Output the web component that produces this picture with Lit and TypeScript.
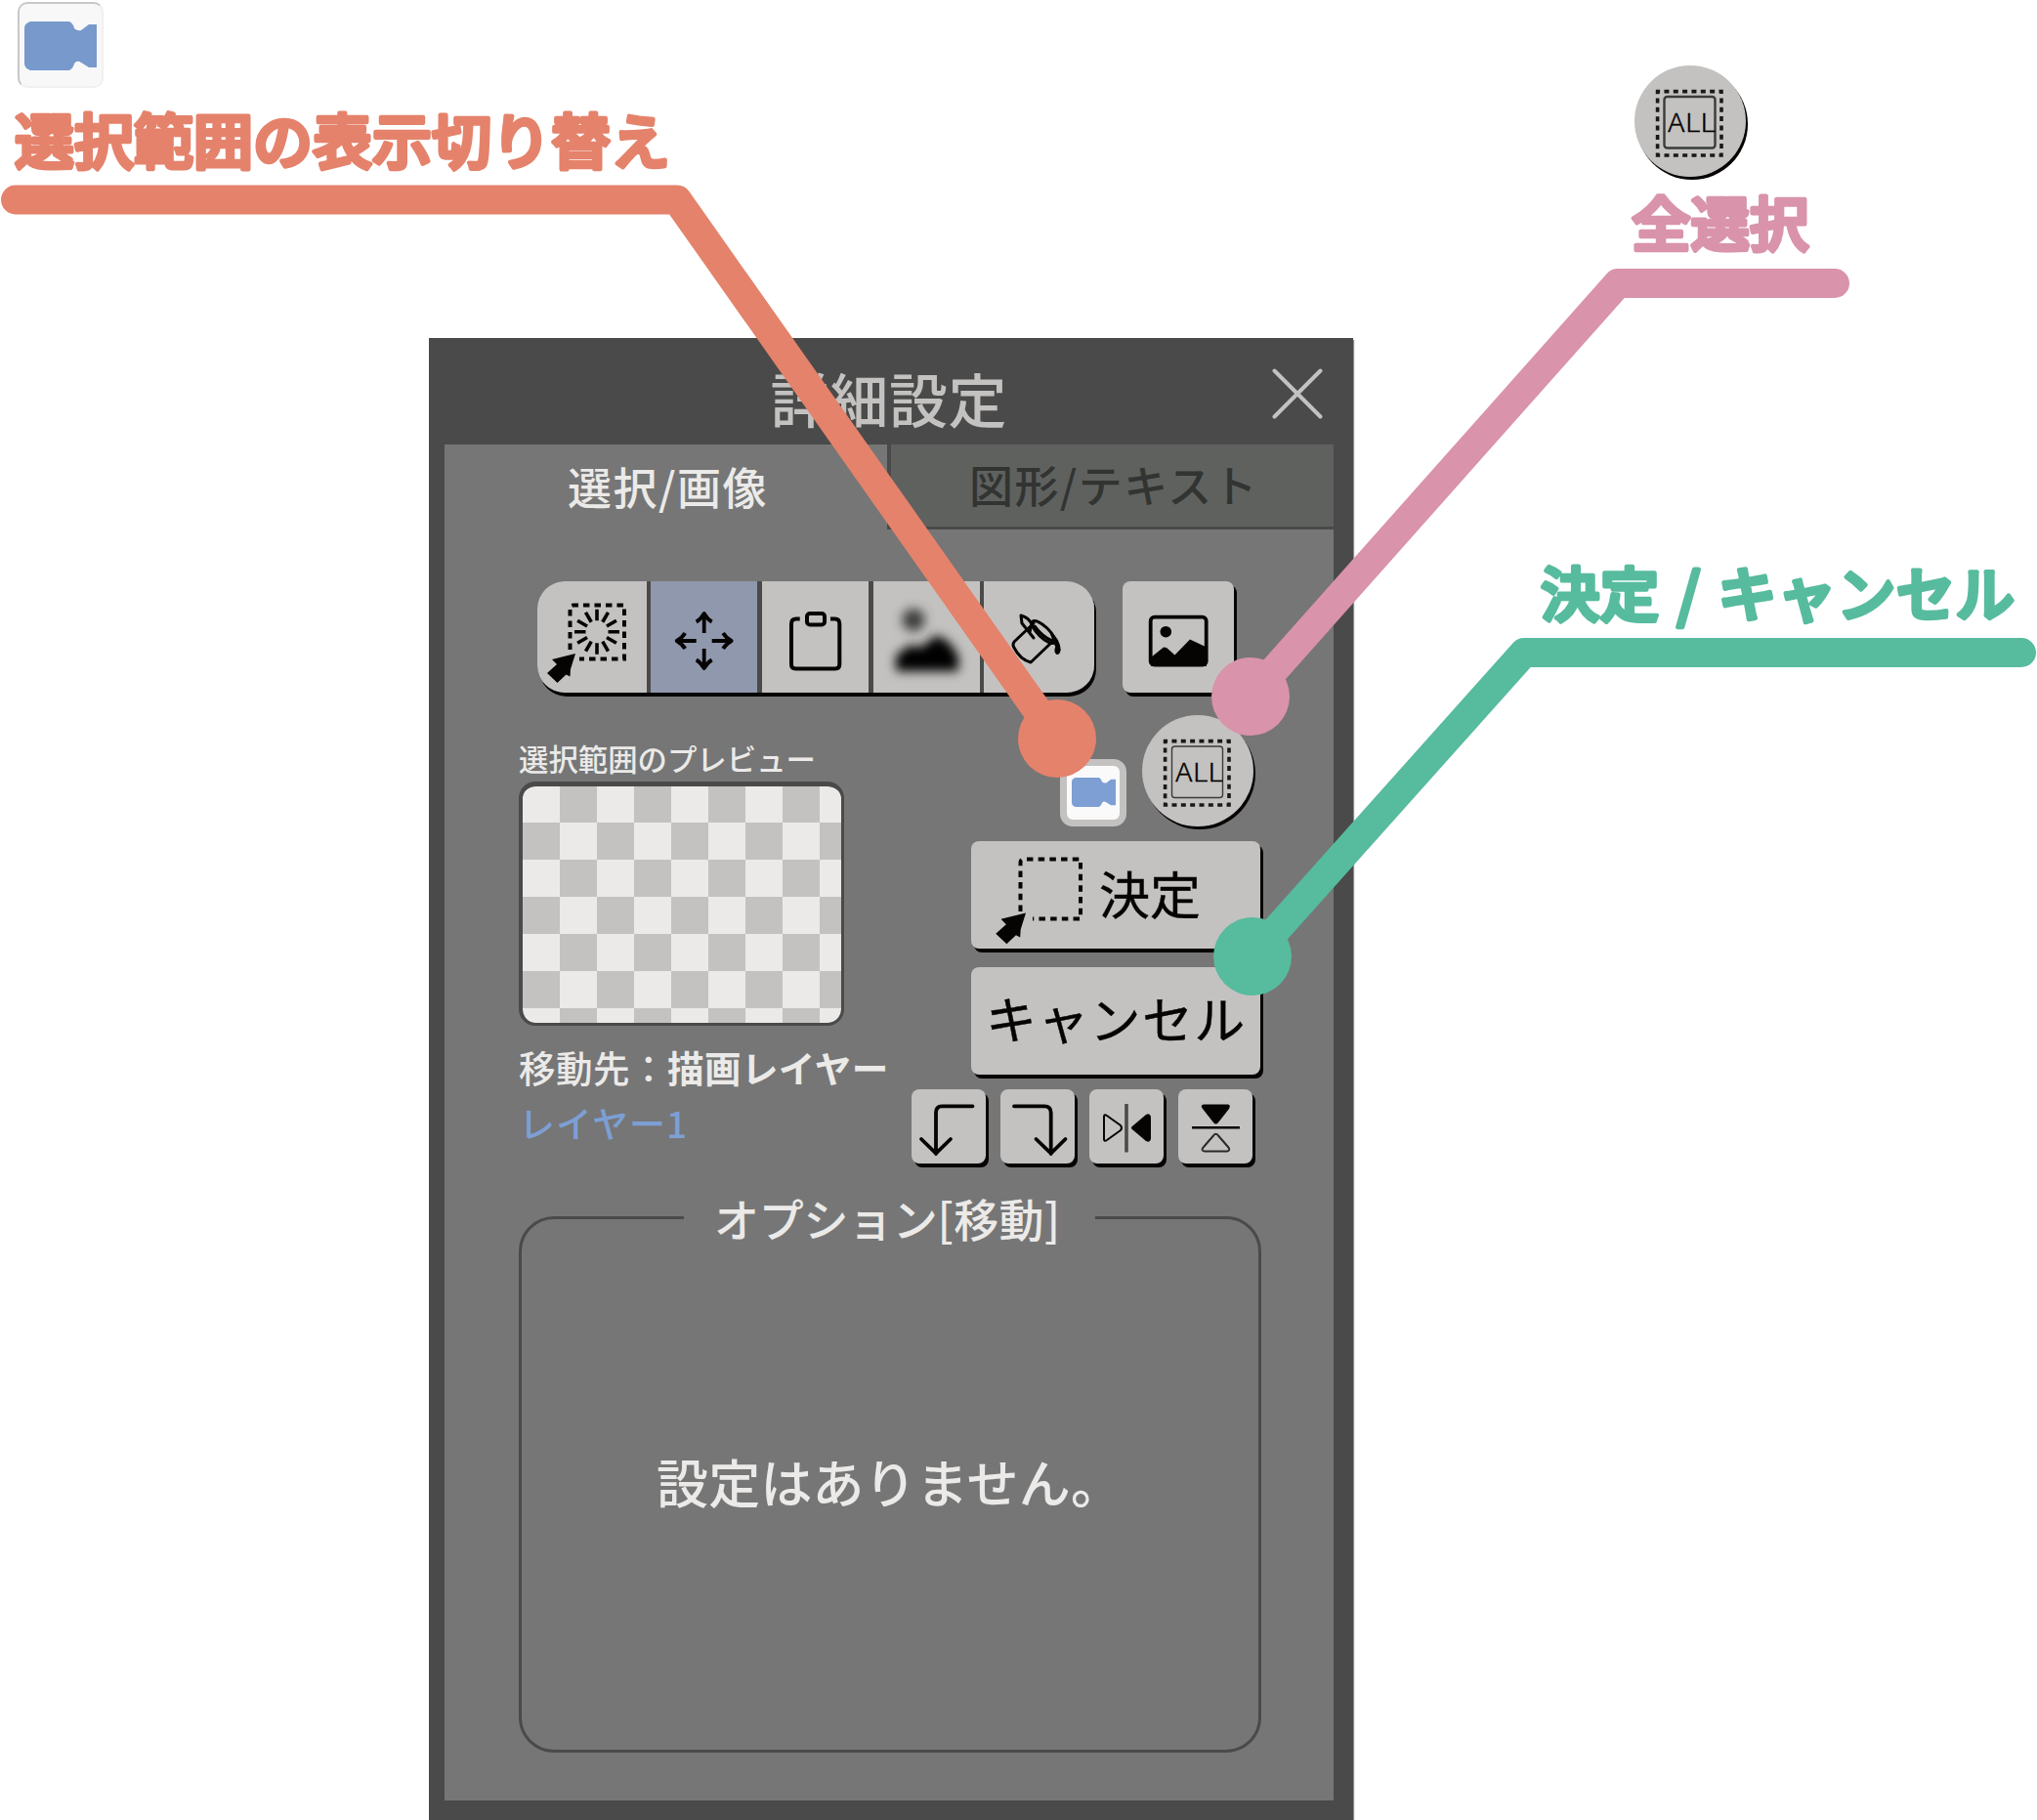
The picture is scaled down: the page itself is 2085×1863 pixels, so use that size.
import { LitElement, html, css, svg } from "lit";
import { customElement, property } from "lit/decorators.js";

const RAYS = Array.from({ length: 12 }, (_, i) => (i * Math.PI) / 6);

@customElement("camera-icon")
class CameraIcon extends LitElement {
  static styles = css`
    :host { display: block; color: #7d9fd4; }
    svg { display: block; width: 100%; height: 100%; }
  `;
  render() {
    return html`<svg viewBox="0 0 74 50" preserveAspectRatio="none">
      <path fill="currentColor"
        d="M6 0H46Q50 2 51 7Q54 10 58 9L66 3H74V47H66L58 42Q54 39 51 43Q50 48 46 50H6Q0 48 0 43V7Q0 2 6 0Z" />
    </svg>`;
  }
}

@customElement("all-icon")
class AllIcon extends LitElement {
  @property({ type: Number }) frame = 1.4;
  static styles = css`
    :host { display: block; width: 114px; height: 114px; border-radius: 50%; background: #c3c2c0; box-shadow: 2px 3px 0 #060303; }
    svg { display: block; }
    text { font: 300 25.5px "Noto Sans CJK JP", sans-serif; fill: #060303; stroke: #060303; stroke-width: 0.3px; }
  `;
  render() {
    return html`<svg width="114" height="114" viewBox="0 0 114 114">
      <rect x="23.6" y="26.6" width="65.4" height="65.4" fill="none" stroke="#1a1818" stroke-width="3.6" stroke-dasharray="5 4.34" stroke-dashoffset="2.5" />
      <rect x="30.5" y="32" width="52" height="52.5" rx="3" fill="none" stroke="#3a3b3b" stroke-width=${this.frame} />
      <text x="34" y="68" textLength="49" lengthAdjust="spacingAndGlyphs">ALL</text>
    </svg>`;
  }
}

@customElement("app-root")
class AppRoot extends LitElement {
  static styles = css`
    :host { display: block; font-family: "Noto Sans CJK JP", "Liberation Sans", sans-serif; }
    svg { display: block; }
    .stage { position: relative; width: 2085px; height: 1863px; overflow: hidden; background: #fff; box-sizing: border-box; padding: 346px 0 0 438.5px; }
    .panel { width: 946px; height: 1517px; background: #4a4a4a; box-shadow: 1px 2px 1px #8c8c8c; }
    .header { display: flex; align-items: flex-start; height: 109px; box-sizing: border-box; padding: 31px 31px 0 350px; justify-content: space-between; }
    .title { font-size: 60px; line-height: 60px; letter-spacing: 0.7px; color: #c3c2c0; font-weight: 500; white-space: nowrap; }
    .inner { width: 910px; height: 1388px; margin-left: 16.5px; background: #767676; }
    .tabs { display: flex; height: 87px; }
    .tab { box-sizing: border-box; height: 87px; font-size: 45px; line-height: 45px; letter-spacing: 1.5px; white-space: nowrap; font-weight: 500; }
    .tab.on { width: 453px; padding: 20px 0 0 126px; color: #ebeae8; }
    .tab.off { width: 457px; padding: 18px 0 0 80px; color: #323432; background: #5f615f; border-left: 4px solid #4a4a4a; border-bottom: 3px solid #4a4a4a; letter-spacing: 1.4px; }
    .tools { display: flex; gap: 29px; padding: 53px 0 0 95px; }
    .group { display: flex; width: 570px; height: 114px; overflow: hidden; border-radius: 28px; background: #4a4a4a; }
    .groupwrap { border-radius: 28px; box-shadow: 2px 4px 0 #060303; }
    .seg { width: 109px; background: #c3c2c0; margin-right: 5px; flex: none; }
    .seg.first { width: 112px; margin-right: 4px; }
    .seg.fourth { margin-right: 4px; }
    .seg.last { width: 113px; margin: 0; }
    .seg.active { background: #8f98ac; }
    .btn { background: #c3c2c0; border-radius: 8px; box-shadow: 3px 4px 0 #060303; box-sizing: border-box; }
    .image { width: 114px; height: 114px; }
    .middle { display: flex; justify-content: space-between; padding: 0 75px 0 76px; height: 514px; }
    .left { padding-top: 52px; color: #ebeae8; white-space: nowrap; }
    .label { font-size: 30.4px; line-height: 30px; font-weight: 500; }
    .preview {
      margin-top: 9px; box-sizing: border-box; width: 333px; height: 250px; border: solid #4a4a4a; border-width: 5px 3px 3px 4px; border-radius: 17px;
      background: repeating-conic-gradient(#c3c2c0 0 25%, #ebeae8 0 50%) 0 -1px / 76px 76px padding-box;
    }
    .dest { margin-top: 23px; font-size: 37.6px; line-height: 38px; letter-spacing: 0.4px; font-weight: 500; }
    .dest b { font-weight: 700; }
    .layer { margin-top: 19px; font-size: 37px; line-height: 38px; letter-spacing: 1px; color: #7d9fd4; font-weight: 500; }
    .right { width: 357px; display: flex; flex-direction: column; align-items: flex-end; padding-top: 23px; }
    .toggles { display: flex; align-items: flex-end; gap: 16px; margin-right: 7px; }
    .eye { width: 68px; height: 69px; box-sizing: border-box; border: 7.5px solid #c3c2c0; border-radius: 13px; background: #fafafa; padding: 12px 4px 11px 5px; }
    .eye camera-icon { height: 30px; }
    .action { width: 296px; height: 110px; display: flex; font-size: 52px; line-height: 52px; color: #060303; white-space: nowrap; font-weight: 400; -webkit-text-stroke: 0.4px currentColor; }
    .ok { margin-top: 15px; }
    .ok span { margin: 27px 0 0 -3px; }
    .cancel { margin-top: 19px; padding: 26px 0 0 15px; letter-spacing: 1.3px; }
    .turns { display: flex; gap: 15px; margin: 15px 8px 0 0; }
    .turn { width: 76px; height: 76px; }
    .options { width: 760px; height: 571px; box-sizing: border-box; margin: 0 0 0 76px; padding: 0; border: 3.5px solid #4a4a4a; border-radius: 36px; min-width: 0; }
    .options legend { box-sizing: border-box; width: 421px; height: 46px; margin-left: 166px; padding: 0 0 0 31px; font-size: 46px; line-height: 46px; letter-spacing: 0.3px; color: #ebeae8; white-space: nowrap; font-weight: 500; }
    .kana { letter-spacing: -0.3px; }
    .none { padding: 220px 0 0 138px; font-size: 53px; line-height: 54px; letter-spacing: 0.2px; color: #ebeae8; white-space: nowrap; font-weight: 500; }
    .lines { position: absolute; left: 0; top: 0; }
    .note { font-size: 61px; font-weight: 500; stroke-width: 4.4px; white-space: pre; }
    .n1 { fill: #e5826b; stroke: #e5826b; }
    .n2 { fill: #d993aa; stroke: #d993aa; font-size: 60.5px; }
    .n3 { fill: #57bb9e; stroke: #57bb9e; font-size: 60.5px; word-spacing: 4px; letter-spacing: 0.3px; }
    .cam { position: absolute; left: 18px; top: 2px; width: 88px; height: 88px; box-sizing: border-box; border: 2px solid #f0f0f0; border-top-color: #c8c8c8; border-left-color: #c8c8c8; border-radius: 10px; background: #f8f8f8; padding: 18px 5px 16px; }
    .cam camera-icon { width: 74px; height: 50px; color: #7799cc; }
    .all { position: absolute; left: 1673px; top: 67px; }
  `;

  private cursor(x: number, y: number, scale = 1) {
    return svg`<path transform="translate(${x} ${y}) scale(${scale})" fill="#060303"
      d="M0 0L-24 6L-19 11L-29 20L-18.500 30L-9.500 21.500L-5.500 23.500L-5 16Z" />`;
  }

  render() {
    return html`
      <div class="stage">
        <div class="panel">
          <div class="header">
            <div class="title">詳細設定</div>
            <svg width="52" height="52" viewBox="0 0 52 52"><path d="M2.500 2.500L49.500 49.500M49.500 2.500L2.500 49.500" stroke="#c3c2c0" stroke-width="4" stroke-linecap="round" /></svg>
          </div>
          <div class="inner">
            <div class="tabs">
              <div class="tab on">選択/画像</div>
              <div class="tab off">図形/テキスト</div>
            </div>
            <div class="tools">
              <div class="groupwrap"><div class="group">
                <div class="seg first">
                  <svg width="112" height="114" viewBox="0 0 112 114">
                    <path d="M33.500 70V28Q33.500 24.500 37 24.500H89V79.500H43" fill="none" stroke="#060303" stroke-width="4" stroke-dasharray="6.500 5" />
                    <g stroke="#060303" stroke-width="3.600">
                      ${RAYS.map((a) => svg`<line x1=${61 + 11.5 * Math.cos(a)} y1=${51.7 + 11.5 * Math.sin(a)} x2=${61 + 23 * Math.cos(a)} y2=${51.7 + 23 * Math.sin(a)} />`)}
                    </g>
                    ${this.cursor(39, 74)}
                  </svg>
                </div>
                <div class="seg active">
                  <svg width="109" height="114" viewBox="0 0 109 114" fill="none" stroke="#060303" stroke-width="3.800">
                    ${[0, 90, 180, 270].map((r) => svg`<path transform="translate(54.700 61) rotate(${r})" d="M0 -8V-27M-8 -19.500Q-3.500 -22 0 -28Q3.500 -22 8 -19.500" stroke-linejoin="round" />`)}
                  </svg>
                </div>
                <div class="seg">
                  <svg width="109" height="114" viewBox="0 0 109 114" fill="none" stroke="#060303" stroke-width="4">
                    <path d="M38.700 38.500H35Q30 38.500 30 43.500V85Q30 89.500 34.500 89.500H75Q79.300 89.500 79.300 85V43.500Q79.300 38.500 74.500 38.500H70" />
                    <rect x="46" y="33" width="18" height="11.500" rx="3" />
                  </svg>
                </div>
                <div class="seg fourth">
                  <svg width="109" height="114" viewBox="0 0 109 114">
                    <defs><filter id="soft" x="-50%" y="-50%" width="200%" height="200%"><feGaussianBlur stdDeviation="5.500" /></filter></defs>
                    <g filter="url(#soft)">
                      <circle cx="41" cy="39.500" r="11.500" fill="#3c3e3e" />
                      <path d="M23 92V76L38 65L48 68L65 55L77 62L87 76V92Z" fill="#060303" />
                    </g>
                  </svg>
                </div>
                <div class="seg last">
                  <svg width="113" height="114" viewBox="0 0 113 114" fill="none" stroke="#060303" stroke-width="3" stroke-linejoin="round" stroke-linecap="round">
                    <path d="M51 43L31 62Q29 65 31 68Q37 80 48 83L70 62" />
                    <ellipse cx="61" cy="52" rx="15.500" ry="5.500" transform="rotate(44 61 52)" />
                    <path d="M51 58L39 43L38 35Q46 37 49 44L47 52M52 46Q60 57 70 61" />
                    <path d="M68 52Q77 59 78 70Q77 75 74.500 74Q72 72 74 67L71 60Z" fill="#060303" stroke-width="1.500" />
                  </svg>
                </div>
              </div></div>
              <div class="btn image">
                <svg width="114" height="114" viewBox="0 0 114 114">
                  <rect x="28.700" y="36.700" width="57" height="49" rx="4" fill="none" stroke="#060303" stroke-width="3.800" />
                  <circle cx="44.300" cy="51.700" r="5.800" fill="#060303" />
                  <path d="M29 78L42 67.500L45 68L53.500 75.500L69 59.500L86 67.500V87H29Z" fill="#060303" />
                </svg>
              </div>
            </div>
            <div class="middle">
              <div class="left">
                <div class="label">選択範囲のプレビュー</div>
                <div class="preview"></div>
                <div class="dest">移動先：<b>描画レイヤー</b></div>
                <div class="layer">レイヤー1</div>
              </div>
              <div class="right">
                <div class="toggles">
                  <div class="eye"><camera-icon></camera-icon></div>
                  <all-icon></all-icon>
                </div>
                <div class="btn action ok">
                  <svg width="134" height="110" viewBox="0 0 134 110">
                    <path d="M50.500 72V22Q50.500 18.500 54 18.500H112V79.500H63" fill="none" stroke="#060303" stroke-width="4" stroke-dasharray="6.500 5.200" />
                    ${this.cursor(56, 73.5, 1.06)}
                  </svg>
                  <span>決定</span>
                </div>
                <div class="btn action cancel">キャンセル</div>
                <div class="turns">
                  <div class="btn turn">
                    <svg width="76" height="76" viewBox="0 0 76 76" fill="none" stroke="#060303" stroke-width="3.800" stroke-linecap="round">
                      <path d="M62.500 17.300H31Q25 17.300 25 24V66M10 51L25 65.500L40 51" />
                    </svg>
                  </div>
                  <div class="btn turn">
                    <svg width="76" height="76" viewBox="0 0 76 76" fill="none" stroke="#060303" stroke-width="3.800" stroke-linecap="round">
                      <path d="M14 17.300H45Q51.700 17.300 51.700 24V66M36.500 51L51.700 65.500L66.500 51" />
                    </svg>
                  </div>
                  <div class="btn turn">
                    <svg width="76" height="76" viewBox="0 0 76 76" stroke-linejoin="round">
                      <path d="M38 15V64.500" stroke="#4a4a4a" stroke-width="3.600" />
                      <path d="M15 28Q15 25 18 27L32 37Q34 39.500 32 42L18 52Q15 54 15 51Z" fill="none" stroke="#060303" stroke-width="2" />
                      <path d="M63 28Q62 24 58 26L45 37Q41 39.500 45 42L58 53Q62 55 63 51Z" fill="#060303" />
                    </svg>
                  </div>
                  <div class="btn turn">
                    <svg width="76" height="76" viewBox="0 0 76 76" stroke-linejoin="round">
                      <path d="M14 39.300H63" stroke="#060303" stroke-width="2.600" />
                      <path d="M26 15.500H51Q54 16 52 20L41 34Q38.500 37 36 34L25 20Q22 16 26 15.500Z" fill="#060303" />
                      <path d="M27 63.500H50Q54 62.500 51 59L41 47.500Q38.500 44 36 47.500L26 59Q22.500 62.500 27 63.500Z" fill="none" stroke="#2a2a2a" stroke-width="2" />
                    </svg>
                  </div>
                </div>
              </div>
            </div>
            <fieldset class="options">
              <legend><span class="kana">オプション</span>[移動]</legend>
              <div class="none">設定はありません。</div>
            </fieldset>
          </div>
        </div>
        <svg class="lines" width="2085" height="1863" viewBox="0 0 2085 1863" fill="none" stroke-width="30" stroke-linecap="round" stroke-linejoin="round">
          <path d="M16 204.500H693L1082 756" stroke="#e5826b" />
          <circle cx="1082" cy="756" r="40" fill="#e5826b" />
          <path d="M1878 290H1656L1280 713" stroke="#d993aa" />
          <circle cx="1280" cy="713" r="40" fill="#d993aa" />
          <path d="M2069 668H1560L1282 979" stroke="#57bb9e" />
          <circle cx="1282" cy="979" r="40" fill="#57bb9e" />
          <text class="note n1" x="15" y="167.500">選択範囲の表示切り替え</text>
          <text class="note n2" x="1670" y="252">全選択</text>
          <text class="note n3" x="1577" y="630.500">決定 / キャンセル</text>
        </svg>
        <div class="cam"><camera-icon></camera-icon></div>
        <all-icon class="all" .frame=${2.4}></all-icon>
      </div>
    `;
  }
}
